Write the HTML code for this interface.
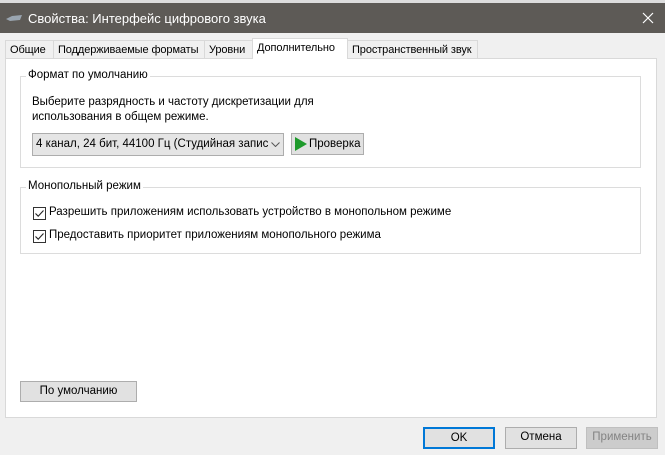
<!DOCTYPE html>
<html><head><meta charset="utf-8"><style>
*{margin:0;padding:0;box-sizing:border-box}
body{width:665px;height:455px;background:#f0f0f0;font-family:"Liberation Sans","DejaVu Sans",sans-serif;font-size:11.5px;color:#000;position:relative;overflow:hidden}
.a{position:absolute}
.title{left:0;top:0;width:665px;height:33px;background:#5d5a56;color:#fff;font-size:13px}
.tab{top:40px;height:19px;border:1px solid #d9d9d9;border-bottom:none;background:#f0f0f0;padding:3px 0 0 4px;white-space:nowrap;overflow:hidden;font-size:11px;letter-spacing:-0.1px}
.panel{left:5px;top:58px;width:652px;height:360px;background:#fff;border:1px solid #d9d9d9}
.grp{border:1px solid #dcdcdc}
.lg{background:#fff;padding:0 2px;white-space:nowrap}
.btn{background:#e1e1e1;border:1px solid #adadad;text-align:center;line-height:19px;white-space:nowrap}
.cb{width:13px;height:13px;border:1px solid #333;background:#fff}
</style></head><body>
<div class="a" style="left:0;top:0;width:665px;height:3px;background:#ddd"></div>
<div class="a title" style="top:3px;height:30px">
 <svg class="a" style="left:6px;top:11px" width="16" height="8"><path d="M0 5 L6 2 L16 1 L14 6 L4 7Z" fill="#9aa5b0"/></svg>
 <div class="a" style="left:28px;top:8px">Свойства: Интерфейс цифрового звука</div>
 <svg class="a" style="left:642px;top:9px" width="12" height="12"><path d="M1 1L11 11M11 1L1 11" stroke="#fff" stroke-width="1.2"/></svg>
</div>
<div class="a tab" style="left:5px;width:49px">Общие</div>
<div class="a tab" style="left:53px;width:152px">Поддерживаемые форматы</div>
<div class="a tab" style="left:204px;width:49px">Уровни</div>
<div class="a tab" style="left:347px;width:131px">Пространственный звук</div>
<div class="a panel"></div>
<div class="a tab" style="left:252px;top:38px;height:21px;width:96px;background:#fff;padding-top:3px">Дополнительно</div>

<div class="a grp" style="left:20px;top:76px;width:621px;height:92px"></div>
<div class="a lg" style="left:26px;top:69px">Формат по умолчанию</div>
<div class="a" style="left:32px;top:95px;line-height:15px">Выберите разрядность и частоту дискретизации для<br>использования в общем режиме.</div>
<div class="a btn" style="left:32px;top:133px;width:252px;height:23px;background:#e5e5e5;text-align:left;padding-left:3px;line-height:21px;overflow:hidden">4 канал, 24 бит, 44100 Гц (Студийная запис
 <svg class="a" style="left:236px;top:0;background:#e5e5e5;padding:8px 2px" width="14" height="21"><path d="M0.5 0.5L4.5 4.5L8.5 0.5" stroke="#555" fill="none"/></svg></div>
<div class="a btn" style="left:291px;top:133px;width:73px;height:22px;text-align:left;padding-left:17px;line-height:20px">Проверка
 <svg class="a" style="left:2px;top:3px" width="14" height="14"><path d="M1 0L13 7L1 14Z" fill="#1e9a2b"/></svg></div>

<div class="a grp" style="left:20px;top:187px;width:621px;height:67px"></div>
<div class="a lg" style="left:26px;top:180px">Монопольный режим</div>
<div class="a cb" style="left:33px;top:207px"></div>
<svg class="a" style="left:33px;top:207px" width="13" height="13"><path d="M2.5 6.5L5.2 9.2L10.5 3.5" stroke="#222" fill="none" stroke-width="1.1"/></svg>
<div class="a" style="left:49px;top:206px">Разрешить приложениям использовать устройство в монопольном режиме</div>
<div class="a cb" style="left:33px;top:230px"></div>
<svg class="a" style="left:33px;top:230px" width="13" height="13"><path d="M2.5 6.5L5.2 9.2L10.5 3.5" stroke="#222" fill="none" stroke-width="1.1"/></svg>
<div class="a" style="left:49px;top:229px">Предоставить приоритет приложениям монопольного режима</div>

<div class="a btn" style="left:20px;top:381px;width:117px;height:21px">По умолчанию</div>
<div class="a btn" style="left:423px;top:427px;width:72px;height:22px;border:2px solid #0078d7;line-height:18px">OK</div>
<div class="a btn" style="left:505px;top:427px;width:72px;height:22px">Отмена</div>
<div class="a btn" style="left:586px;top:427px;width:72px;height:22px;background:#ccc;border-color:#bfbfbf;color:#838383">Применить</div>
</body></html>
